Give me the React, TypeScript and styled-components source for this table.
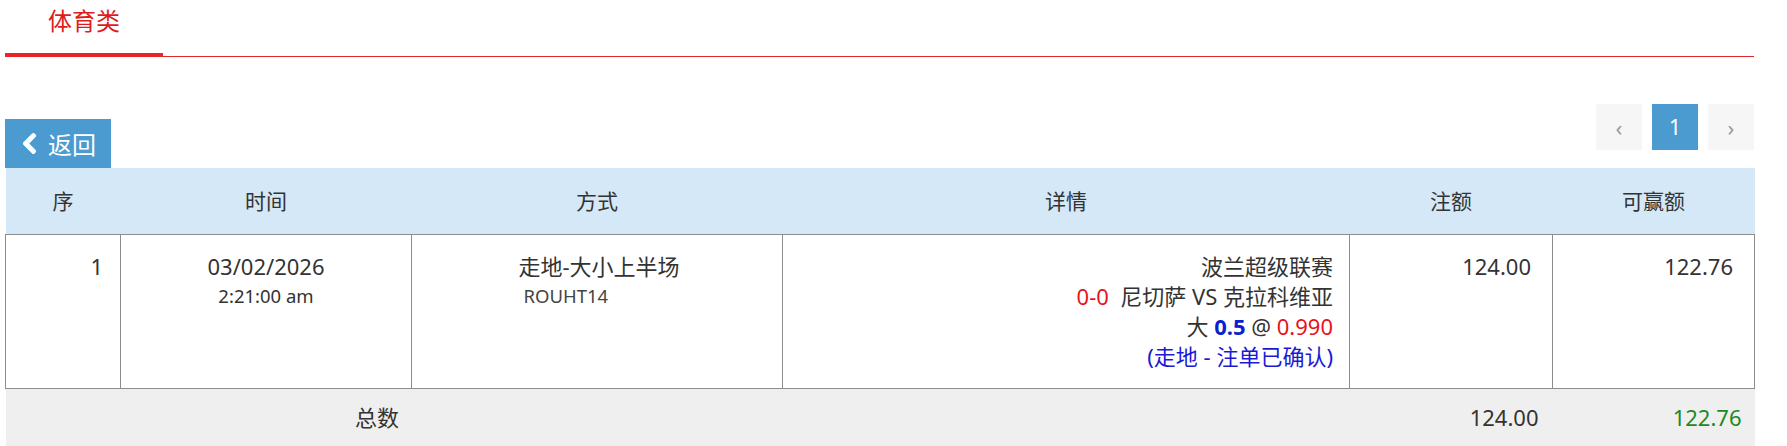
import styled, { createGlobalStyle } from 'styled-components'

const GlobalStyle = createGlobalStyle`
    body {
        margin: 0;
        background: #fff;
        font-family: "Noto Sans", "Noto Sans CJK SC", sans-serif;
        color: #333;
    }
`

const ChevronLeft = () => (
    <svg width="17" height="23" viewBox="0 0 320 512" fill="currentColor" stroke="currentColor" strokeWidth="30">
        <path d="M34.52 239.03L228.87 44.69c9.37-9.37 24.57-9.37 33.94 0l22.67 22.67c9.36 9.36 9.37 24.52.04 33.9L131.49 256l154.02 154.75c9.34 9.38 9.32 24.54-.04 33.9l-22.67 22.67c-9.37 9.37-24.57 9.37-33.94 0L34.52 272.97c-9.37-9.37-9.37-24.57 0-33.94z" />
    </svg>
)

const App = () => {
    return (
        <>
        <GlobalStyle />
        <Page>
            <TabBar>
                <TabItem>体育类</TabItem>
            </TabBar>
            <Toolbar>
                <BackButton>
                    <ChevronLeft />
                    <span>返回</span>
                </BackButton>
                <Pagination>
                    <PageBox>‹</PageBox>
                    <PageBox active>1</PageBox>
                    <PageBox>›</PageBox>
                </Pagination>
            </Toolbar>
            <Table>
                <colgroup>
                    <col style={{ width: 115 }} />
                    <col style={{ width: 291 }} />
                    <col style={{ width: 371 }} />
                    <col style={{ width: 567 }} />
                    <col style={{ width: 203 }} />
                    <col style={{ width: 202 }} />
                </colgroup>
                <thead>
                    <tr>
                        <Th>序</Th>
                        <Th>时间</Th>
                        <Th>方式</Th>
                        <Th>详情</Th>
                        <Th>注额</Th>
                        <Th>可赢额</Th>
                    </tr>
                </thead>
                <tbody>
                    <tr>
                        <Td align="right" pad={17}>1</Td>
                        <Td align="center">
                            03/02/2026
                            <Small>2:21:00 am</Small>
                        </Td>
                        <Td align="center">
                            <MethodBlock>
                                走地-大小上半场
                                <Code>ROUHT14</Code>
                            </MethodBlock>
                        </Td>
                        <Td align="right" pad={16}>
                            <div>波兰超级联赛</div>
                            <div><Red>0-0</Red>&nbsp;&nbsp;尼切萨 VS 克拉科维亚</div>
                            <div>大 <Odds>0.5</Odds> @ <Red>0.990</Red></div>
                            <Status>(走地 - 注单已确认)</Status>
                        </Td>
                        <Td align="right" pad={21}>124.00</Td>
                        <Td align="right" pad={21}>122.76</Td>
                    </tr>
                </tbody>
                <tfoot>
                    <tr>
                        <Tf colSpan={3} align="center" pad={42}>总数</Tf>
                        <Tf />
                        <Tf align="right" pad={14}>124.00</Tf>
                        <Tf align="right" pad={13}><Green>122.76</Green></Tf>
                    </tr>
                </tfoot>
            </Table>
        </Page>
        </>
    )
}

export default App

const Page = styled.div`
    width: 1749px;
    padding-left: 5px;
`

const TabBar = styled.div`
    display: flex;
    border-bottom: 1px solid #e3262c;
`

const TabItem = styled.div`
    width: 158px;
    box-sizing: border-box;
    text-align: center;
    font-size: 24px;
    line-height: 34px;
    padding: 4px 0 15px;
    color: #dd1c1c;
    border-bottom: 4px solid #e8262a;
    margin-bottom: -1px;
`

const Toolbar = styled.div`
    display: flex;
    justify-content: space-between;
    align-items: flex-end;
    min-height: 111px;
    box-sizing: border-box;
    padding-top: 47px;
`

const BackButton = styled.button`
    display: flex;
    align-items: center;
    gap: 10px;
    width: 106px;
    height: 49px;
    padding: 0 0 0 16px;
    border: none;
    background: #4b9bd0;
    color: #fff;
    font-family: "Noto Sans CJK SC", sans-serif;
    font-size: 24px;
    cursor: pointer;
`

const Pagination = styled.div`
    align-self: flex-start;
    display: flex;
    gap: 10px;
`

const PageBox = styled.div<{ active?: boolean }>`
    width: 46px;
    height: 46px;
    display: flex;
    align-items: center;
    justify-content: center;
    background: ${p => (p.active ? '#4b9bd0' : '#f6f6f6')};
    color: ${p => (p.active ? '#fff' : '#999')};
    font-size: ${p => (p.active ? '21px' : '22px')};
`

const Table = styled.table`
    width: 1749px;
    table-layout: fixed;
    border-collapse: collapse;
    font-size: 22px;
    line-height: 30px;
`

const Th = styled.th`
    background: #d4e8f7;
    font-weight: normal;
    font-size: 21px;
    text-align: center;
    padding: 18px 8px;
    border-bottom: 1px solid #8c8c8c;
    color: #333;
`

const Td = styled.td<{ align?: string; pad?: number }>`
    vertical-align: top;
    text-align: ${p => p.align || 'left'};
    padding: 16px ${p => p.pad ?? 8}px 17px 8px;
    border: 1px solid #8c8c8c;
    color: #333;
`

const Tf = styled.td<{ align?: string; pad?: number }>`
    background: #efefef;
    text-align: ${p => p.align || 'left'};
    padding: 13px ${p => p.pad ?? 8}px 20px 8px;
    color: #333;
`

const Small = styled.div`
    font-size: 18.5px;
`

const MethodBlock = styled.div`
    display: inline-block;
    text-align: left;
    margin-left: 4px;
`

const Code = styled.div`
    font-size: 18.5px;
    padding-left: 5px;
    color: #444;
`

const Red = styled.span`
    color: #e8121b;
`

const Odds = styled.b`
    color: #0a1fd0;
`

const Status = styled.div`
    color: #1a1ad6;
`

const Green = styled.span`
    color: #1c8a1c;
`
